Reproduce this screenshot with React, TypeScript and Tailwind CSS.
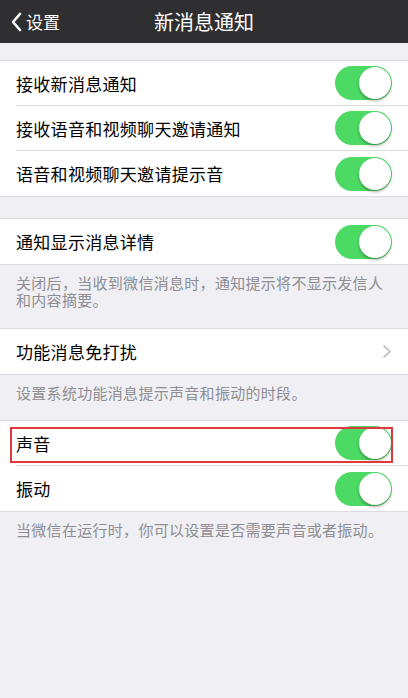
import React from "react";

const font = { fontFamily: '"Noto Sans CJK SC", "Noto Sans", sans-serif' };

function Toggle() {
  return (
    <div className="relative h-[34px] w-[57px] rounded-full bg-[#4cd964]">
      <div className="absolute right-[1px] top-[1px] h-[32px] w-[32px] rounded-full bg-white shadow-[0_2px_3px_rgba(0,0,0,0.3)]" />
    </div>
  );
}

function Row({ label, last, chevron }: { label: string; last?: boolean; chevron?: boolean }) {
  return (
    <div className="flex h-[45px] items-center pl-[16px]">
      <div
        className={`flex h-full flex-1 items-center justify-between pr-[16px] ${
          last ? "" : "border-b border-[#dcdce0]"
        }`}
      >
        <span className="text-[17px] leading-none tracking-[0.3px] text-black">{label}</span>
        {chevron ? (
          <svg width="10" height="15" viewBox="0 0 10 15">
            <path d="M1.5 1.5 L8 7.5 L1.5 13.5" fill="none" stroke="#c4c4c8" strokeWidth="1.8" />
          </svg>
        ) : (
          <Toggle />
        )}
      </div>
    </div>
  );
}

export default function App() {
  return (
    <div className="relative min-h-[698px] w-[408px] bg-[#efeff4]" style={font}>
      <div className="relative flex h-[43px] items-center justify-center bg-[#2f2f31]">
        <div className="absolute left-[10px] top-0 flex h-full items-center">
          <svg width="13" height="20" viewBox="0 0 13 20">
            <path d="M10 2 L3 10 L10 18" fill="none" stroke="#ffffff" strokeWidth="2.6" strokeLinecap="round" strokeLinejoin="round" />
          </svg>
          <span className="ml-[3px] text-[17px] leading-none text-white">设置</span>
        </div>
        <span className="text-[20px] leading-none text-white">新消息通知</span>
      </div>

      <div className="h-[17px]" />
      <div className="border-y border-[#dcdce0] bg-white">
        <Row label="接收新消息通知" />
        <Row label="接收语音和视频聊天邀请通知" />
        <Row label="语音和视频聊天邀请提示音" last />
      </div>

      <div className="h-[21px]" />
      <div className="border-y border-[#dcdce0] bg-white">
        <Row label="通知显示消息详情" last />
      </div>
      <p className="px-[16px] pb-[20px] pt-[9px] text-[15px] leading-[17px] tracking-[0.3px] text-[#8e8e93]">
        关闭后，当收到微信消息时，通知提示将不显示发信人和内容摘要。
      </p>

      <div className="border-y border-[#dcdce0] bg-white">
        <Row label="功能消息免打扰" last chevron />
      </div>
      <p className="px-[16px] pb-[19px] pt-[9px] text-[15px] leading-[17px] tracking-[0.3px] text-[#8e8e93]">
        设置系统功能消息提示声音和振动的时段。
      </p>

      <div className="relative border-y border-[#dcdce0] bg-white">
        <Row label="声音" />
        <Row label="振动" last />
        <div className="absolute left-[10px] top-[6px] h-[36px] w-[383px] border-[2.5px] border-[#e0383e]" />
      </div>
      <p className="px-[16px] pt-[9px] text-[15px] leading-[17px] tracking-[0.3px] text-[#8e8e93]">
        当微信在运行时，你可以设置是否需要声音或者振动。
      </p>
    </div>
  );
}
